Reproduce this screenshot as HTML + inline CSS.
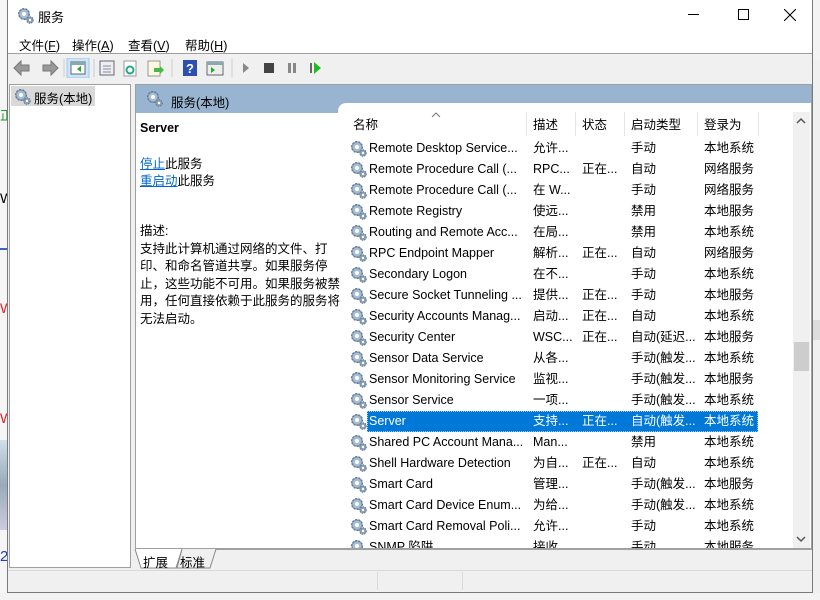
<!DOCTYPE html>
<html><head><meta charset="utf-8"><style>
*{margin:0;padding:0;box-sizing:border-box}
body{width:820px;height:600px;overflow:hidden;background:#f3f3f3;font-family:"Liberation Sans","Noto Sans CJK SC",sans-serif;font-size:12px;color:#000;position:relative}
.abs{position:absolute}
.win{left:7px;top:0;width:806px;height:593px;background:#f0f0f0;border:1px solid #7a7a7a;border-top:none}
.row{position:absolute;left:340px;width:420px;height:21px;line-height:21px;font-size:12.5px;white-space:nowrap}
.row span{position:absolute;top:0;overflow:hidden}
.c1{left:29px;width:160px}.c2{left:193px}.c3{left:242px}.c4{left:291px}.c5{left:364px}
.sel{background:#0078d7;color:#fff;outline:1px dotted #9cf;outline-offset:-1px}
.g{position:absolute;left:10px;top:2px}
.hd{position:absolute;top:114px;font-size:12.5px}
.sep{position:absolute;top:112px;width:1px;height:24px;background:#e5e5e5}
</style></head><body>
<svg width="0" height="0" style="position:absolute"><defs>
<g id="gear"><circle cx="7" cy="7" r="5.5" fill="#7e9ab8" stroke="#5a7390" stroke-width="1" stroke-dasharray="2 1.4"/><circle cx="7" cy="7" r="4.3" fill="#a9bdd3"/><circle cx="7" cy="7" r="2" fill="#fff"/><circle cx="13" cy="13" r="3.3" fill="#8a9fb5" stroke="#607890" stroke-dasharray="1.5 1"/><circle cx="13" cy="13" r="1.2" fill="#fff"/></g>
</defs></svg>
<div class="abs" style="left:0;top:0;width:7px;height:600px;background:#f5f5f5"></div>
<div class="abs" style="left:0;top:105px;font-size:13px;color:#1a9a2a">正</div>
<div class="abs" style="left:0;top:190px;font-size:14px">W</div>
<div class="abs" style="left:0;top:300px;font-size:14px;color:#d22">W</div>
<div class="abs" style="left:0;top:410px;font-size:14px;color:#d22">W</div>
<div class="abs" style="left:0;top:248px;width:7px;height:2px;background:#4060d0"></div>
<div class="abs" style="left:0;top:440px;width:7px;height:90px;background:linear-gradient(#cfe0e8,#9ab,#ccd)"></div>
<div class="abs" style="left:0;top:548px;font-size:15px;color:#2040c0">2</div>
<div class="abs" style="left:813px;top:60px;width:7px;height:540px;background:#f0f0f0"></div>
<div class="abs" style="left:813px;top:320px;width:7px;height:20px;background:#ddd"></div>

<div class="abs win">
<div class="abs" style="left:0;top:0;width:804px;height:31px;background:#fff"></div>
<svg class="abs" style="left:9px;top:7px" width="18" height="18"><use href="#gear"/></svg>
<div class="abs" style="left:30px;top:7px;font-size:13px">服务</div>
<div class="abs" style="left:680px;top:14px;width:11px;height:1px;background:#000"></div>
<div class="abs" style="left:730px;top:9px;width:11px;height:11px;border:1px solid #000"></div>
<svg class="abs" style="left:776px;top:9px" width="12" height="12"><path d="M0 0L12 12M12 0L0 12" stroke="#000" stroke-width="1.1"/></svg>
<div class="abs" style="left:0;top:31px;width:804px;height:23px;background:#fff;border-bottom:1px solid #a0a0a0"></div>
<div class="abs" style="left:11px;top:35px;font-size:12.5px">文件(<u>F</u>)</div>
<div class="abs" style="left:64px;top:35px;font-size:12.5px">操作(<u>A</u>)</div>
<div class="abs" style="left:120px;top:35px;font-size:12.5px">查看(<u>V</u>)</div>
<div class="abs" style="left:177px;top:35px;font-size:12.5px">帮助(<u>H</u>)</div>
<svg class="abs" style="left:4px;top:58px" width="310" height="20">
<path d="M2 10L9 3V7H17V13H9V17Z" fill="#999" stroke="#777"/>
<path d="M46 10L39 3V7H31V13H39V17Z" fill="#999" stroke="#777"/>
<line x1="52" y1="1" x2="52" y2="19" stroke="#ccc"/>
<rect x="55" y="0" width="22" height="20" fill="#cce4f7" stroke="#99c9ef"/>
<rect x="59" y="4" width="14" height="12" fill="#fff" stroke="#667"/><rect x="59" y="4" width="14" height="3" fill="#8aa"/><path d="M69 8V14L65 11Z" fill="#2a2"/>
<line x1="82" y1="1" x2="82" y2="19" stroke="#ccc"/>
<rect x="88" y="3" width="14" height="14" fill="#eee" stroke="#667"/><path d="M91 8H99M91 11H99M91 14H99" stroke="#88a"/>
<rect x="112" y="3" width="12" height="15" fill="#fff" stroke="#999"/><circle cx="118" cy="12" r="3.5" fill="none" stroke="#2a8" stroke-width="2"/>
<rect x="136" y="3" width="12" height="15" fill="#fff8e0" stroke="#999"/><path d="M142 10H148V8L152 12L148 16V14H142Z" fill="#4b4"/>
<line x1="160" y1="1" x2="160" y2="19" stroke="#ccc"/>
<rect x="171" y="2" width="14" height="16" fill="#2c4fb0"/><text x="174" y="15" fill="#fff" font-size="13" font-weight="bold" font-family="Liberation Sans">?</text>
<rect x="195" y="4" width="16" height="13" fill="#eee" stroke="#667"/><rect x="195" y="4" width="16" height="3" fill="#8aa"/><path d="M199 9V15L203 12Z" fill="#2a2"/>
<line x1="220" y1="1" x2="220" y2="19" stroke="#ccc"/>
<path d="M231 5V15L237 10Z" fill="#888"/>
<rect x="252" y="5" width="10" height="10" fill="#444"/>
<rect x="276" y="5" width="3" height="10" fill="#888"/><rect x="281" y="5" width="3" height="10" fill="#888"/>
<rect x="298" y="5" width="2" height="10" fill="#666"/><path d="M302 4V16L309 10Z" fill="#2b2"/>
</svg>
<div class="abs" style="left:1px;top:84px;width:122px;height:484px;background:#fff;border:1px solid #a0a0a0"></div>
<div class="abs" style="left:3px;top:86px;width:84px;height:20px;background:#d9d9d9"></div>
<svg class="abs" style="left:6px;top:88px" width="18" height="18"><use href="#gear"/></svg>
<div class="abs" style="left:26px;top:88px;font-size:12.5px">服务(本地)</div>
<div class="abs" style="left:127px;top:84px;width:677px;height:465px;background:#fff;border:1px solid #a0a0a0"></div>
<div class="abs" style="left:128px;top:85px;width:675px;height:28px;background:#99b4d1"></div>
<div class="abs" style="left:330px;top:103px;width:473px;height:20px;background:#fff;border-top-left-radius:8px"></div>
<svg class="abs" style="left:138px;top:90px" width="18" height="18"><use href="#gear"/></svg>
<div class="abs" style="left:163px;top:92px;font-size:12.5px">服务(本地)</div>
<div class="abs" style="left:132px;top:121px;font-weight:bold;font-size:12.5px">Server</div>
<div class="abs" style="left:132px;top:153px;font-size:12.5px"><u style="color:#0066cc">停止</u>此服务</div>
<div class="abs" style="left:132px;top:170px;font-size:12.5px"><u style="color:#0066cc">重启动</u>此服务</div>
<div class="abs" style="left:132px;top:223px;width:200px;font-size:12.5px;line-height:17.6px">描述:<br>支持此计算机通过网络的文件、打印、和命名管道共享。如果服务停止，这些功能不可用。如果服务被禁用，任何直接依赖于此服务的服务将无法启动。</div>
</div>

<div class="hd" style="left:353px">名称</div>
<svg class="abs" style="left:431px;top:112px" width="10" height="6"><path d="M1 5L5 1L9 5" stroke="#777" fill="none"/></svg>
<div class="hd" style="left:533px">描述</div>
<div class="hd" style="left:582px">状态</div>
<div class="hd" style="left:631px">启动类型</div>
<div class="hd" style="left:704px">登录为</div>
<div class="sep" style="left:526px"></div><div class="sep" style="left:575px"></div><div class="sep" style="left:624px"></div><div class="sep" style="left:697px"></div><div class="sep" style="left:758px"></div>

<div class="abs" style="left:340px;top:137px;width:453px;height:411px;overflow:hidden">
<div style="position:relative;left:-340px;top:-136px">
<div class="row" style="top:137px"><svg class="g" width="18" height="18"><use href="#gear"/></svg><span class="c1">Remote Desktop Service...</span><span class="c2">允许...</span><span class="c4">手动</span><span class="c5">本地系统</span></div>
<div class="row" style="top:158px"><svg class="g" width="18" height="18"><use href="#gear"/></svg><span class="c1">Remote Procedure Call (...</span><span class="c2">RPC...</span><span class="c3">正在...</span><span class="c4">自动</span><span class="c5">网络服务</span></div>
<div class="row" style="top:179px"><svg class="g" width="18" height="18"><use href="#gear"/></svg><span class="c1">Remote Procedure Call (...</span><span class="c2">在 W...</span><span class="c4">手动</span><span class="c5">网络服务</span></div>
<div class="row" style="top:200px"><svg class="g" width="18" height="18"><use href="#gear"/></svg><span class="c1">Remote Registry</span><span class="c2">使远...</span><span class="c4">禁用</span><span class="c5">本地服务</span></div>
<div class="row" style="top:221px"><svg class="g" width="18" height="18"><use href="#gear"/></svg><span class="c1">Routing and Remote Acc...</span><span class="c2">在局...</span><span class="c4">禁用</span><span class="c5">本地系统</span></div>
<div class="row" style="top:242px"><svg class="g" width="18" height="18"><use href="#gear"/></svg><span class="c1">RPC Endpoint Mapper</span><span class="c2">解析...</span><span class="c3">正在...</span><span class="c4">自动</span><span class="c5">网络服务</span></div>
<div class="row" style="top:263px"><svg class="g" width="18" height="18"><use href="#gear"/></svg><span class="c1">Secondary Logon</span><span class="c2">在不...</span><span class="c4">手动</span><span class="c5">本地系统</span></div>
<div class="row" style="top:284px"><svg class="g" width="18" height="18"><use href="#gear"/></svg><span class="c1">Secure Socket Tunneling ...</span><span class="c2">提供...</span><span class="c3">正在...</span><span class="c4">手动</span><span class="c5">本地服务</span></div>
<div class="row" style="top:305px"><svg class="g" width="18" height="18"><use href="#gear"/></svg><span class="c1">Security Accounts Manag...</span><span class="c2">启动...</span><span class="c3">正在...</span><span class="c4">自动</span><span class="c5">本地系统</span></div>
<div class="row" style="top:326px"><svg class="g" width="18" height="18"><use href="#gear"/></svg><span class="c1">Security Center</span><span class="c2">WSC...</span><span class="c3">正在...</span><span class="c4">自动(延迟...</span><span class="c5">本地服务</span></div>
<div class="row" style="top:347px"><svg class="g" width="18" height="18"><use href="#gear"/></svg><span class="c1">Sensor Data Service</span><span class="c2">从各...</span><span class="c4">手动(触发...</span><span class="c5">本地系统</span></div>
<div class="row" style="top:368px"><svg class="g" width="18" height="18"><use href="#gear"/></svg><span class="c1">Sensor Monitoring Service</span><span class="c2">监视...</span><span class="c4">手动(触发...</span><span class="c5">本地服务</span></div>
<div class="row" style="top:389px"><svg class="g" width="18" height="18"><use href="#gear"/></svg><span class="c1">Sensor Service</span><span class="c2">一项...</span><span class="c4">手动(触发...</span><span class="c5">本地系统</span></div>
<div class="row" style="top:410px"><svg class="g" width="18" height="18"><use href="#gear"/></svg><div class="sel" style="position:absolute;left:27px;top:0;width:391px;height:21px"></div><span class="c1" style="color:#fff">Server</span><span class="c2" style="color:#fff">支持...</span><span class="c3" style="color:#fff">正在...</span><span class="c4" style="color:#fff">自动(触发...</span><span class="c5" style="color:#fff">本地系统</span></div>
<div class="row" style="top:431px"><svg class="g" width="18" height="18"><use href="#gear"/></svg><span class="c1">Shared PC Account Mana...</span><span class="c2">Man...</span><span class="c4">禁用</span><span class="c5">本地系统</span></div>
<div class="row" style="top:452px"><svg class="g" width="18" height="18"><use href="#gear"/></svg><span class="c1">Shell Hardware Detection</span><span class="c2">为自...</span><span class="c3">正在...</span><span class="c4">自动</span><span class="c5">本地系统</span></div>
<div class="row" style="top:473px"><svg class="g" width="18" height="18"><use href="#gear"/></svg><span class="c1">Smart Card</span><span class="c2">管理...</span><span class="c4">手动(触发...</span><span class="c5">本地服务</span></div>
<div class="row" style="top:494px"><svg class="g" width="18" height="18"><use href="#gear"/></svg><span class="c1">Smart Card Device Enum...</span><span class="c2">为给...</span><span class="c4">手动(触发...</span><span class="c5">本地系统</span></div>
<div class="row" style="top:515px"><svg class="g" width="18" height="18"><use href="#gear"/></svg><span class="c1">Smart Card Removal Poli...</span><span class="c2">允许...</span><span class="c4">手动</span><span class="c5">本地系统</span></div>
<div class="row" style="top:536px"><svg class="g" width="18" height="18"><use href="#gear"/></svg><span class="c1">SNMP 陷阱</span><span class="c2">接收...</span><span class="c4">手动</span><span class="c5">本地服务</span></div>
</div></div>
<div class="abs" style="left:793px;top:112px;width:17px;height:436px;background:#f0f0f0"></div>
<svg class="abs" style="left:796px;top:117px" width="10" height="8"><path d="M1 6L5 2L9 6" stroke="#555" stroke-width="1.5" fill="none"/></svg>
<svg class="abs" style="left:796px;top:535px" width="10" height="8"><path d="M1 2L5 6L9 2" stroke="#555" stroke-width="1.5" fill="none"/></svg>
<div class="abs" style="left:794px;top:342px;width:15px;height:29px;background:#cdcdcd"></div>
<div class="abs" style="left:135px;top:549px;width:677px;height:1px;background:#a0a0a0"></div>
<svg class="abs" style="left:134px;top:549px" width="100" height="21"><path d="M1 0L7 19H42L48 0" fill="#fff" stroke="#888"/><path d="M48 0L43 19H76L82 0" fill="#f0f0f0" stroke="#888"/></svg>
<div class="abs" style="left:143px;top:552px;font-size:12.5px">扩展</div>
<div class="abs" style="left:180px;top:552px;font-size:12.5px">标准</div>
<div class="abs" style="left:8px;top:570px;width:804px;height:1px;background:#d9d9d9"></div>
<div class="abs" style="left:377px;top:572px;width:1px;height:18px;background:#d9d9d9"></div>
<div class="abs" style="left:462px;top:572px;width:1px;height:18px;background:#d9d9d9"></div>
<div class="abs" style="left:0;top:593px;width:820px;height:7px;background:#f3f3f3"></div>
</body></html>
